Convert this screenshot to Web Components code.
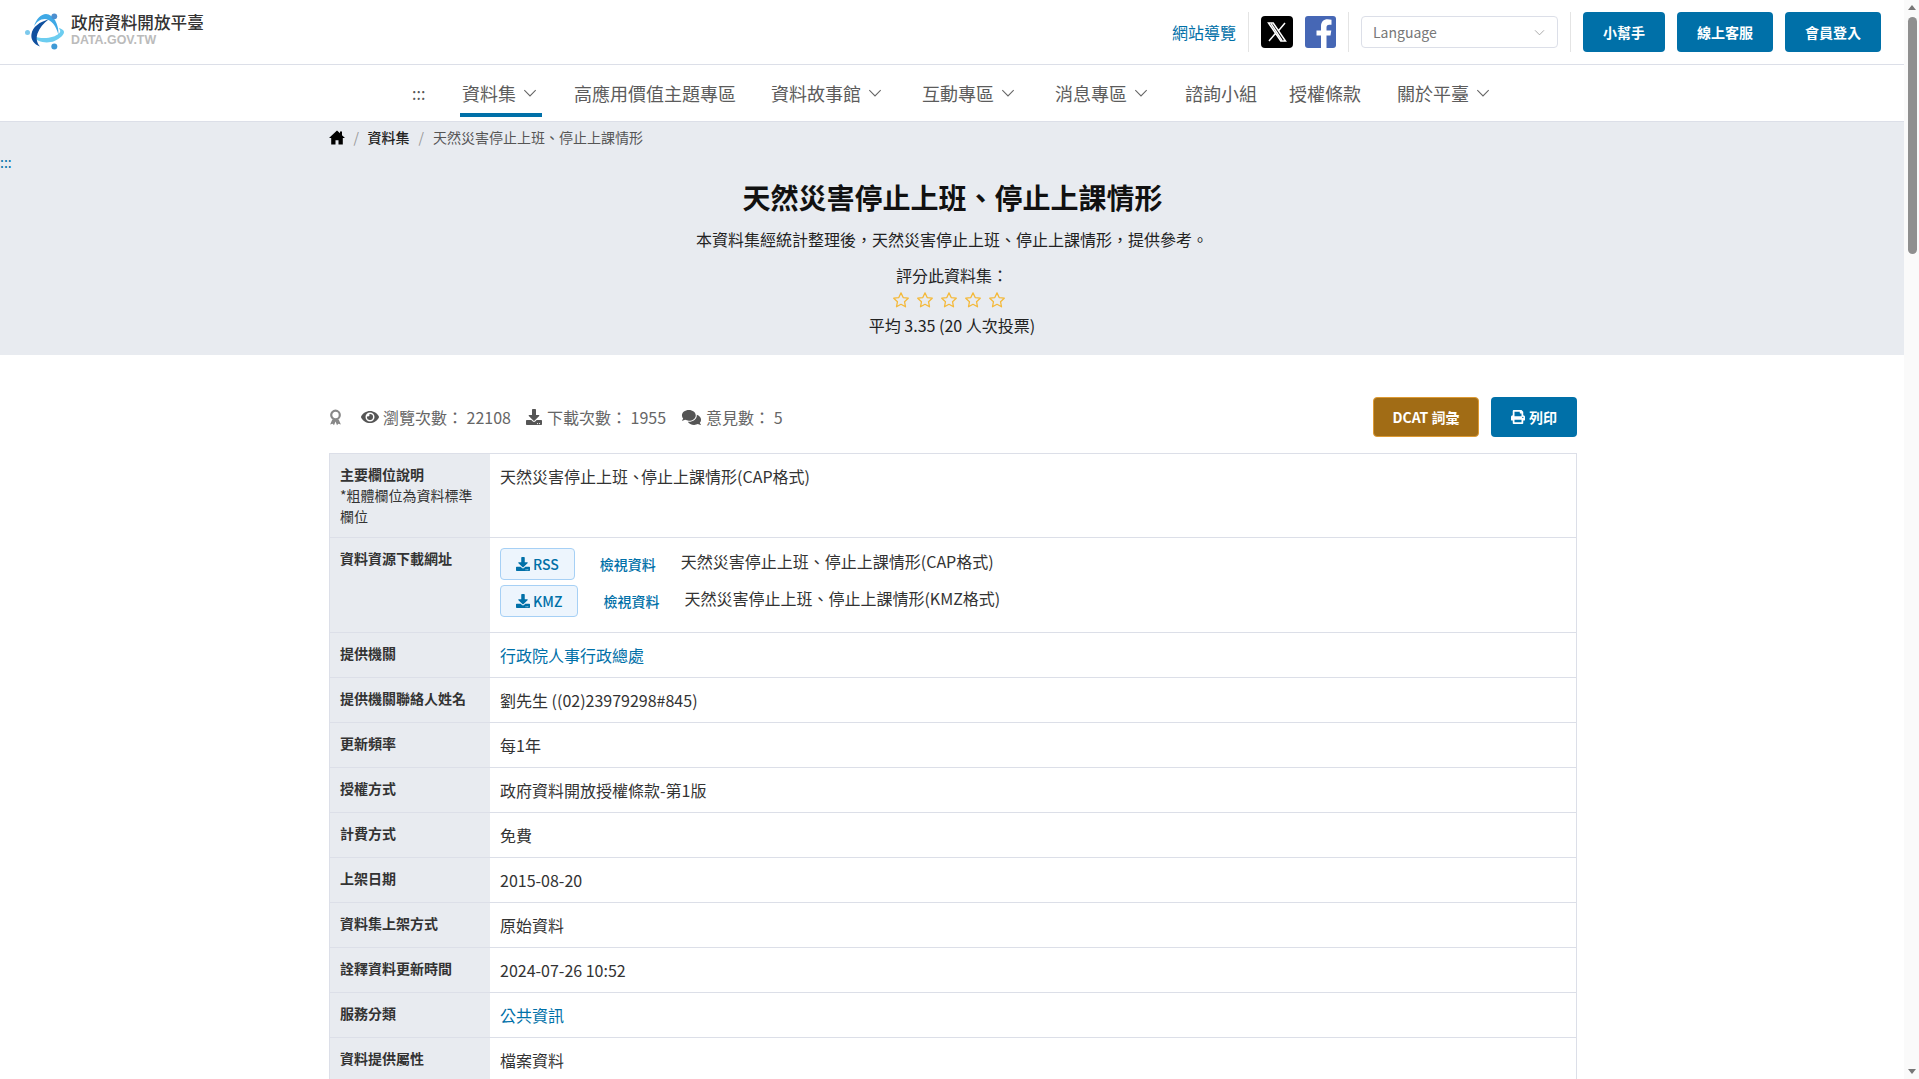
<!DOCTYPE html>
<html lang="zh-Hant"><head><meta charset="utf-8"><title>天然災害停止上班、停止上課情形</title>
<style>
html,body{margin:0;height:100%;overflow:hidden;background:#fff}
body{font:16px/1.5 "Noto Sans CJK TC","Noto Sans",sans-serif;color:#333}
page-shell{display:flex;height:100vh}
</style></head><body>
<page-shell>
  <site-header></site-header>
  <site-nav>
    <nav-item caret active style="margin-left:35px">資料集</nav-item>
    <nav-item style="margin-left:30px">高應用價值主題專區</nav-item>
    <nav-item caret style="margin-left:31px">資料故事館</nav-item>
    <nav-item caret style="margin-left:33px">互動專區</nav-item>
    <nav-item caret style="margin-left:33px">消息專區</nav-item>
    <nav-item style="margin-left:30px">諮詢小組</nav-item>
    <nav-item style="margin-left:28px">授權條款</nav-item>
    <nav-item caret style="margin-left:32px">關於平臺</nav-item>
  </site-nav>
  <page-hero></page-hero>
  <stats-bar></stats-bar>
  <data-table>
    <data-row label="主要欄位說明" note="*粗體欄位為資料標準欄位">天然災害停止上班<span style="letter-spacing:-3px">、</span>停止上課情形(CAP格式)</data-row>
    <data-row label="資料資源下載網址" tight>
      <res-line fmt="RSS" name="天然災害停止上班、停止上課情形(CAP格式)"></res-line>
      <res-line fmt="KMZ" name="天然災害停止上班、停止上課情形(KMZ格式)"></res-line>
    </data-row>
    <data-row label="提供機關" link>行政院人事行政總處</data-row>
    <data-row label="提供機關聯絡人姓名">劉先生 ((02)23979298#845)</data-row>
    <data-row label="更新頻率">每1年</data-row>
    <data-row label="授權方式">政府資料開放授權條款-第1版</data-row>
    <data-row label="計費方式">免費</data-row>
    <data-row label="上架日期">2015-08-20</data-row>
    <data-row label="資料集上架方式">原始資料</data-row>
    <data-row label="詮釋資料更新時間">2024-07-26 10:52</data-row>
    <data-row label="服務分類" link>公共資訊</data-row>
    <data-row label="資料提供屬性">檔案資料</data-row>
  </data-table>
</page-shell>
<script>
const P={
eye:['0 0 576 512','M572.52 241.4C518.29 135.59 410.93 64 288 64S57.68 135.64 3.48 241.41a32.35 32.35 0 0 0 0 29.19C57.71 376.41 165.07 448 288 448s230.32-71.64 284.52-177.41a32.35 32.35 0 0 0 0-29.19zM288 400a144 144 0 1 1 144-144 143.93 143.93 0 0 1-144 144zm0-240a95.31 95.31 0 0 0-25.31 3.79 47.85 47.85 0 0 1-66.9 66.9A95.78 95.78 0 1 0 288 160z'],
dl:['0 0 512 512','M216 0h80c13.3 0 24 10.7 24 24v168h87.7c17.8 0 26.7 21.5 14.1 34.1L269.7 378.3c-7.5 7.5-19.8 7.5-27.3 0L90.1 226.1c-12.6-12.6-3.7-34.1 14.1-34.1H192V24c0-13.3 10.7-24 24-24zm296 376v112c0 13.3-10.7 24-24 24H24c-13.3 0-24-10.7-24-24V376c0-13.3 10.7-24 24-24h146.7l49 49c20.1 20.1 52.5 20.1 72.6 0l49-49H488c13.3 0 24 10.7 24 24zm-124 88c0-11-9-20-20-20s-20 9-20 20 9 20 20 20 20-9 20-20zm64 0c0-11-9-20-20-20s-20 9-20 20 9 20 20 20 20-9 20-20z'],
cm:['0 0 576 512','M416 192c0-88.4-93.1-160-208-160S0 103.6 0 192c0 34.3 14.1 65.9 38 92-13.4 30.2-35.5 54.2-35.8 54.5-2.2 2.3-2.8 5.7-1.5 8.7S4.8 352 8 352c36.6 0 66.9-12.3 88.7-25 32.2 15.7 70.3 25 111.3 25 114.9 0 208-71.6 208-160zm122 220c23.9-26 38-57.7 38-92 0-66.9-53.5-124.2-129.3-148.1.9 6.6 1.3 13.3 1.3 20.1 0 105.9-107.7 192-240 192-10.8 0-21.3-.8-31.7-1.9C207.8 439.6 281.8 480 368 480c41 0 79.1-9.2 111.3-25 21.8 12.7 52.1 25 88.7 25 3.2 0 6.1-1.9 7.3-4.8 1.3-2.9.7-6.3-1.5-8.7-.3-.3-22.4-24.2-35.8-54.5z'],
pr:['0 0 512 512','M448 192V77.25c0-8.49-3.37-16.62-9.37-22.63L393.37 9.37c-6-6-14.14-9.37-22.63-9.37H96C78.33 0 64 14.33 64 32v160c-35.35 0-64 28.65-64 64v112c0 8.84 7.16 16 16 16h48v96c0 17.67 14.33 32 32 32h320c17.67 0 32-14.33 32-32v-96h48c8.84 0 16-7.16 16-16V256c0-35.35-28.65-64-64-64zm-64 256H128v-96h256v96zm0-224H128V64h192v48c0 8.84 7.16 16 16 16h48v96zm48 72c-13.25 0-24-10.75-24-24 0-13.26 10.75-24 24-24s24 10.74 24 24c0 13.25-10.75 24-24 24z']
};
const ic=(n,w,h,c='currentColor',st='')=>`<svg viewBox="${P[n][0]}" width="${w}" height="${h}" fill="${c}" style="flex:none;${st}"><path d="${P[n][1]}"/></svg>`;
const chev=(s=14,c='#666')=>`<svg width="${s}" height="${s}" viewBox="0 0 16 16" fill="none" stroke="${c}" stroke-width="1.2" style="flex:none"><path d="M1.5 4.8 8 11.4l6.5-6.6"/></svg>`;
function def(name,html){customElements.define(name,class extends HTMLElement{
  connectedCallback(){ if(this.shadowRoot)return; const r=this.attachShadow({mode:'open'}); r.innerHTML=typeof html==='function'?html(this):html; }
});}

def('page-shell',`<style>:host{display:flex}
.main{flex:1;min-width:0;height:1079px;overflow:hidden;display:flex;flex-direction:column}
</style><div class="main"><slot></slot></div><fake-scroll></fake-scroll>`);

def('fake-scroll',`<style>:host{display:flex;flex-direction:column;align-items:center;justify-content:space-between;width:15px;flex:none;background:#fafafa;position:relative;height:1079px}
.thumb{position:absolute;left:4px;top:17px;width:9px;height:237px;border-radius:5px;background:#8f8f8f}
.a{width:0;height:0;border-left:4.5px solid transparent;border-right:4.5px solid transparent;margin:5px 0}
.u{border-bottom:5px solid #777}.d{border-top:5px solid #777}</style>
<div class="a u"></div><div class="thumb"></div><div class="a d"></div>`);

def('site-header',`<style>:host{display:flex;align-items:center;height:64px;border-bottom:1px solid #dcdfe8;padding:0 23px 0 25px;flex:none;background:#fff}
.logo{display:flex;align-items:center;gap:6px;color:#333}
.t{display:flex;flex-direction:column;line-height:1;margin-top:-4px}
.t b{font-weight:500;font-size:16.6px;color:#333;line-height:19px;white-space:nowrap}
.t i{font:400 12.4px/14px "Liberation Sans",sans-serif;font-weight:700;color:#bbb;letter-spacing:0;margin-top:1px}
.sp{flex:1}
.lnk{color:#0070a8;font-size:16px;padding-right:12px;border-right:1px solid #e4e4e4;height:40px;line-height:40px;box-sizing:content-box;margin-right:12px;white-space:nowrap}
.soc{display:flex;gap:12px;align-items:center;padding-right:12px;border-right:1px solid #e4e4e4;height:40px;margin-right:12px}
.sel{width:197px;height:32px;box-sizing:border-box;border:1px solid #dcdfe8;border-radius:4px;display:flex;align-items:center;justify-content:space-between;padding:0 12px 0 11px;color:#777;font-size:14px;margin-right:12px}
.div{width:1px;height:40px;background:#e4e4e4;margin-right:12px}
.btn{height:40px;background:#0070a8;color:#fff;border-radius:4px;font-size:14px;font-weight:700;display:flex;align-items:center;justify-content:center;margin-right:12px}
.btn:last-child{margin-right:0}
</style>
<div class="logo"><svg width="40" height="40" viewBox="0 0 40 40">
<path d="M7 23.500C12 30.500 22 32 29.500 29C35 26.500 39 23 39 20C39 18 36 16.500 33.500 16C35.500 18 36 19.500 34 21.500C29 26 17 28 7 23.500z" fill="#6ccdf0"/>
<path d="M9 14.500C11 7 16 2 21 2C28.500 2.500 34 12 33.500 23C31 14 26.500 7.500 20 7C15 7 11 10.500 9 14.500z" fill="#3fa9e6"/>
<path d="M23.500 7.500C15 9.500 7.500 15 6.500 22C5.500 27.500 9 32.500 15 34.500C11.500 30.500 11 26 12.500 21.500C14.500 16 18.500 11 23.500 7.500z" fill="#10509f"/>
<circle cx="29.300" cy="4.300" r="2.900" fill="#4d8fcf"/><circle cx="2.500" cy="20.500" r="2.500" fill="#7cc9ec"/><circle cx="29.300" cy="34.500" r="3" fill="#3f9ad6"/>
</svg><div class="t"><b>政府資料開放平臺</b><i>DATA.GOV.TW</i></div></div>
<div class="sp"></div>
<div class="lnk">網站導覽</div>
<div class="soc">
<svg width="32" height="32" viewBox="0 0 32 32"><rect width="32" height="32" rx="4" fill="#000"/><path fill="none" stroke="#fff" stroke-width="1.500" d="M7.500 7h4.700l12.300 18h-4.700zM8 25l7-8.300M24 7l-6.700 7.900"/><path stroke="#fff" stroke-width="1.400" d="M10 7.500 21 24.500"/></svg>
<svg width="31" height="32" viewBox="0 0 31 32"><rect width="31" height="32" rx="3" fill="#4667b5"/><path fill="#fff" d="M21.500 32V19.500h4l.8-5h-4.800v-3c0-1.500.7-2.700 2.800-2.700h2.200V3.700c-1-.2-2.500-.4-4-.4-3.800 0-6.500 2.400-6.500 6.800v4.400H11.500v5H16V32z"/></svg>
</div>
<div class="sel"><span>Language</span>${chev(11,'#999')}</div>
<div class="div"></div>
<div class="btn" style="width:82px">小幫手</div>
<div class="btn" style="width:96px">線上客服</div>
<div class="btn" style="width:96px">會員登入</div>`);

def('nav-item',h=>{const hasC=h.hasAttribute('caret'),a=h.hasAttribute('active');return `<style>:host{display:flex;align-items:center;height:56px;position:relative;padding:0 2px;box-sizing:border-box;color:#5c5c5c;font-size:18px;white-space:nowrap;flex:none}
.c{margin-left:7px;display:flex;margin-right:3px}
.bar{position:absolute;left:0;right:0;bottom:4px;height:4px;background:#0070a8}
</style><slot></slot>${hasC?`<span class="c">${chev(14)}</span>`:''}${a?'<div class="bar"></div>':''}`});

def('site-nav',`<style>:host{display:flex;justify-content:flex-start;align-items:center;height:56px;border-bottom:1px solid #dcdfe8;flex:none;background:#fff;padding-left:412px}
.dots{color:#555;font-size:16px;width:13px;flex:none}
</style><span class="dots">:::</span><slot></slot>`);

def('page-hero',`<style>:host{display:block;flex:none;height:233px;background:#e8ebf0;position:relative;text-align:center;color:#222}
.bc{display:flex;align-items:center;padding-left:329px;height:31px;font-size:14px;color:#555;text-align:left}
.bc b{font-weight:500;color:#222}.s{color:#999;margin:0 8.500px}
.skip{position:absolute;left:0;top:30px;color:#0070a8;font-size:14px;line-height:21px}
h1{margin:23px 0 0;padding-left:1px;font-size:28px;line-height:42px;color:#111;font-weight:700}
p{margin:0;font-size:16px;line-height:24px}
.sub{margin-top:9px}.rate{margin-top:12px}
.st{display:flex;justify-content:center;gap:6px;height:24px;align-items:center;padding-right:7px;margin-top:1px}
.av{margin-top:1px}
</style>
<div class="bc"><svg width="16" height="15" viewBox="0 0 16 15" fill="#000" style="flex:none"><path d="M8 .5 0 8h2.200v6.500h4.300v-4.200h3v4.200h4.300V8H16l-3-2.800V1.500h-2v1.800z"/></svg><span class="s">/</span><b>資料集</b><span class="s" style="margin:0 9px">/</span><span>天然災害停止上班、停止上課情形</span></div>
<span class="skip">:::</span>
<h1>天然災害停止上班、停止上課情形</h1>
<p class="sub">本資料集經統計整理後，天然災害停止上班、停止上課情形，提供參考。</p>
<p class="rate">評分此資料集：</p>
<div class="st">${Array(5).fill('<svg width="18" height="18" viewBox="0 0 24 24" fill="none" stroke="#f4b93a" stroke-width="1.700" stroke-linejoin="round"><path d="M12 2.500l2.900 6.200 6.800.9-5 4.700 1.300 6.700-6-3.300-6 3.300 1.300-6.700-5-4.700 6.800-.9z"/></svg>').join('')}</div>
<p class="av">平均 3.35 (20 人次投票)</p>`);

def('stats-bar',`<style>:host{display:flex;align-items:center;flex:none;width:1248px;margin:42px 0 16px 329px;height:40px;color:#666;font-size:16px;white-space:nowrap}
.i{display:flex;align-items:center;gap:4px}
.sp{flex:1}
.b{height:40px;box-sizing:border-box;border-radius:4px;color:#fff;font-size:14px;font-weight:700;display:flex;align-items:center;justify-content:center;gap:4px}
</style>
<svg width="13" height="17" viewBox="0 0 12 17" fill="none" style="flex:none;margin-right:19px"><circle cx="6" cy="6" r="4.300" stroke="#888" stroke-width="2.200"/><path d="M2.800 10.500.6 15.500l2.600-.8 1.300 1.600L6 12.500l1.500 3.800 1.300-1.600 2.600.8-2.200-5" fill="#888"/></svg>
<span class="i">${ic('eye',18,16,'#555')}瀏覽次數： 22108</span>
<span class="i" style="margin-left:15px">${ic('dl',16,16,'#555','margin-right:1px')}下載次數： 1955</span>
<span class="i" style="margin-left:15px">${ic('cm',21,17,'#555')}意見數： 5</span>
<span class="sp"></span>
<span class="b" style="width:106px;background:#a16c15;border:1px solid #dd9a33;margin-right:12px">DCAT 詞彙</span>
<span class="b" style="width:86px;background:#0070a8">${ic('pr',14,14,'#fff')}列印</span>`);

def('data-table',`<style>:host{display:block;flex:none;width:1248px;margin-left:329px;box-sizing:border-box;border:1px solid #dcdfe8;border-bottom:0}</style><slot></slot>`);

def('data-row',h=>{const lb=h.getAttribute('label'),n=h.getAttribute('note'),L=h.hasAttribute('link'),T=h.hasAttribute('tight');return `<style>:host{display:grid;grid-template-columns:160px 1fr;border-bottom:1px solid #dcdfe8;box-sizing:border-box}
.l{background:#e8ebf0;padding:10px;font-size:14px;line-height:21px;color:#333}
.l b{font-weight:700;display:block}
.v{padding:10px 8px 10px 10px;font-size:16px;line-height:24px;color:${L?'#0070a8':'#333'}}
</style><div class="l"><b>${lb}</b>${n?n:''}</div><div class="v"><slot></slot></div>`});

def('res-line',h=>`<style>:host{display:flex;align-items:center;height:32px;margin-bottom:5px;color:#333;font-size:16px;white-space:nowrap}
.b{display:flex;align-items:center;gap:3px;height:32px;box-sizing:border-box;padding:0 15px;border:1px solid #a6d0f5;border-radius:4px;background:#edf5fd;color:#0070a8;font-size:14px;font-weight:500;margin-right:25px}
.v{color:#0070a8;font-size:14px;font-weight:500;margin-right:25px}
.n{position:relative;top:-3px}
</style><span class="b">${ic('dl',14,14)}${h.getAttribute('fmt')}</span><span class="v">檢視資料</span><span class="n">${h.getAttribute('name')}</span>`);
</script>
</body></html>
